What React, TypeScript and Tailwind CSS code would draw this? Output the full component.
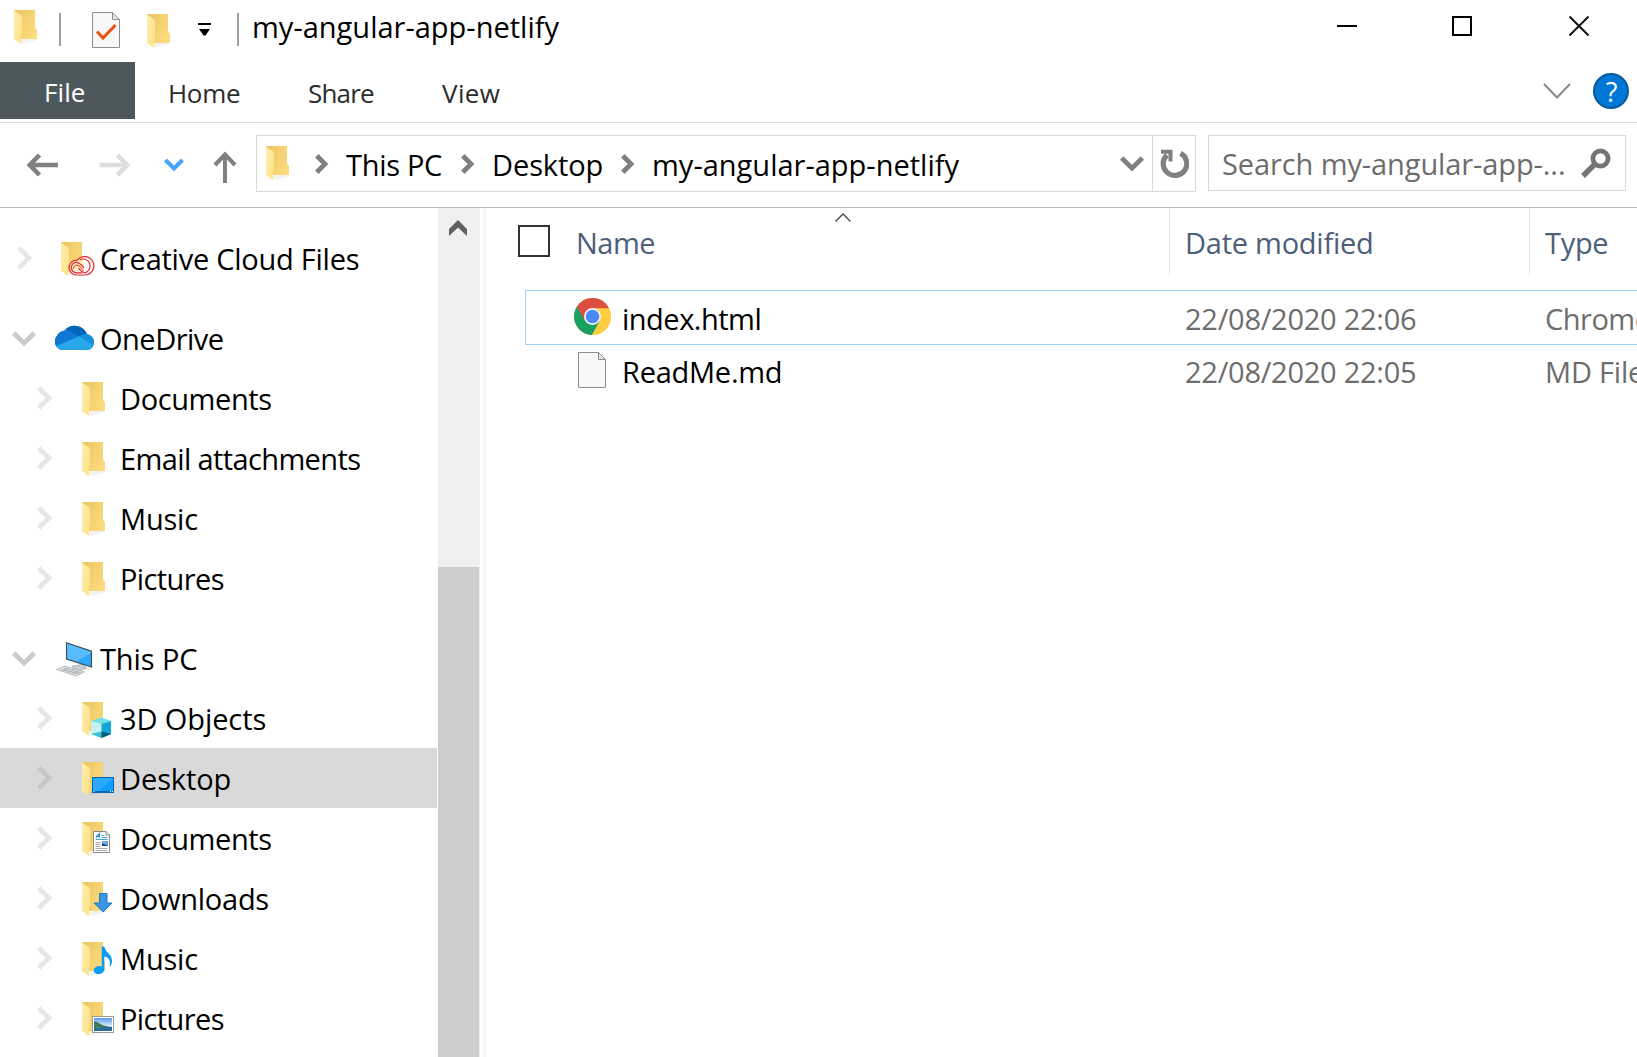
import type { ReactNode } from "react";

/* ---------- shared icons ---------- */

function FolderShape() {
  return (
    <>
      <defs>
        <linearGradient id="folderBack" x1="0" y1="0" x2="1" y2="0.6">
          <stop offset="0" stopColor="#ecc35f" />
          <stop offset="1" stopColor="#fbdb7d" />
        </linearGradient>
        <linearGradient id="folderFlap" x1="0" y1="0" x2="1" y2="1">
          <stop offset="0" stopColor="#ffeeb0" />
          <stop offset="1" stopColor="#ffe084" />
        </linearGradient>
      </defs>
      <path d="M6 29.5 L24 28.5 L20 31 L8 34 Z" fill="#000" opacity="0.05" />
      <path d="M0 0 H21 V17.5 L23 20 V29 H5 Z" fill="url(#folderBack)" />
      <path d="M0 0.5 L8 6 V24 L7 25.500 V34 L0 29 Z" fill="url(#folderFlap)" />
    </>
  );
}

function Folder({ children, className = "" }: { children?: ReactNode; className?: string }) {
  return (
    <svg className={`block h-9 w-[33px] shrink-0 overflow-visible ${className}`} viewBox="0 0 33 36">
      <FolderShape />
      {children}
    </svg>
  );
}

function CreativeCloudBadge() {
  const outline =
    "M16.500 18 A9.200 9.200 0 1 1 24 33 H15.500 A7.400 7.400 0 0 1 15.500 18.200 Z";
  return (
    <g fill="none" stroke="#e3262a">
      <path d={outline} fill="#fff" fillOpacity="0.5" strokeWidth="1.200" />
      <path d="M19 17.800 A7 7 0 1 1 24 30.800 C21 30.800 20 29 17.500 26.200" strokeWidth="1.200" />
      <path d="M21.500 30.800 H15.500 A5.200 5.200 0 1 1 15.500 20.400 C18.500 20.400 20 22.500 23 25.800" strokeWidth="1.200" />
      <path d="M12.500 26.500 A3.400 3.400 0 0 1 18 23.800 L22.500 28.200" strokeWidth="1" />
    </g>
  );
}

function CubeBadge() {
  return (
    <g>
      <path d="M9 19 L19.500 15.500 L29 19 L19.500 22 Z" fill="#6fdfe8" />
      <path d="M9 19 L19.500 22 V36 L9 32 Z" fill="#c4f2f2" />
      <path d="M19.500 22 L29 19 V32 L19.500 36 Z" fill="#12a5d6" />
      <path d="M9 32 L19.500 29.500 V36 Z" fill="#35c4d6" />
      <path d="M19.500 29.500 L29 32 L19.500 36 Z" fill="#075c70" />
    </g>
  );
}

function DesktopBadge() {
  return (
    <g>
      <rect x="10.500" y="15.500" width="21" height="15" fill="#0f9dff" stroke="#0067b0" />
      <path d="M11 16 H31 L17 29 H11 Z" fill="#2aa9ff" />
      <path d="M11 29.500 H31" stroke="#0067b0" />
      <path d="M11.500 29.500 h1 M28 29.500 h1 M30 29.500 h1" stroke="#fff" />
    </g>
  );
}

function DocumentBadge() {
  return (
    <g>
      <path d="M11.500 9.500 H24 L27.500 13 V30.500 H11.500 Z" fill="#fff" stroke="#8b8b8b" />
      <path d="M24 9.500 V13 H27.500" fill="#eee" stroke="#8b8b8b" />
      <path d="M14 15.500 L17.500 11.500 V15.500 M15 14.500 H18" stroke="#1c87c9" strokeWidth="1.200" fill="none" />
      <path d="M19.500 13.500 h3 M19.500 15.500 h6 M13.500 17.500 h12" stroke="#3fa3dc" />
      <path d="M13.500 20.500 h5 M13.500 22.500 h5 M13.500 24.500 h5 M13.500 26.500 h12 M13.500 28.500 h12" stroke="#a9a9a9" />
      <rect x="20" y="19" width="6" height="5" fill="#6ba9e6" />
      <path d="M20 24 V21.500 L26 23.500 V24 Z" fill="#22485e" />
    </g>
  );
}

function DownloadBadge() {
  return (
    <path
      d="M17.500 11.500 H25 V21 H30 L21.200 30 L12.200 21 H17.500 Z"
      fill="#3a96e4"
      stroke="#2377bd"
    />
  );
}

function MusicBadge() {
  return (
    <g fill="#0a9bf5">
      <ellipse cx="17" cy="28" rx="5.300" ry="4" transform="rotate(-12 17 28)" />
      <path d="M19.700 4.500 H22.300 C23 10 30 12 30 19 C30 22 28.800 24 27.500 25 C28.800 20 28 15.500 22.300 14.500 V28 H19.700 Z" />
    </g>
  );
}

function PictureBadge() {
  return (
    <g>
      <defs>
        <linearGradient id="sky" x1="0" y1="0" x2="0" y2="1">
          <stop offset="0" stopColor="#5b9bea" />
          <stop offset="0.6" stopColor="#d8ebfb" />
          <stop offset="1" stopColor="#7aa9c9" />
        </linearGradient>
      </defs>
      <rect x="10.500" y="14.500" width="21" height="16" fill="#fff" stroke="#9a9a9a" />
      <rect x="12" y="16" width="18" height="13" fill="url(#sky)" />
      <path d="M12 19.500 C15 19 18 22.500 22 23.500 L27 24.500 L12 26 Z" fill="#3f7a55" />
      <path d="M12 26 L24 24.500 L30 25 V29 H12 Z" fill="#2d6c94" />
    </g>
  );
}

function OneDrive() {
  return (
    <svg className="mb-px block h-[27px] w-10 shrink-0" viewBox="0 0 40 27">
      <defs>
        <clipPath id="cloud">
          <path d="M8.500 26 A8.500 8.500 0 0 1 1.500 12.500 A10 10 0 0 1 9.500 6.800 A13 13 0 0 1 32 10.300 A8 8 0 0 1 33 26 Z" />
        </clipPath>
      </defs>
      <g clipPath="url(#cloud)">
        <rect width="40" height="27" fill="#0f78d4" />
        <path d="M8 6 L12 -2 H34 V10 L24 12 Z" fill="#0364b8" />
        <path d="M8 6 Q12 5.500 15 7.500 L25 12.500 L0 23.500 V6 Z" fill="#0f78d4" />
        <path d="M24 12.500 Q28 9 40 9 V26 L22 13.500 Z" fill="#1490df" />
        <path d="M0 22.500 L24 12.300 L40 22 V27 H0 Z" fill="#28a8ea" />
      </g>
    </svg>
  );
}

function Computer() {
  return (
    <svg className="mt-0.5 block h-[35px] w-[37px] shrink-0" viewBox="0 0 37 35">
      <path d="M16 24 L26 22.500 L31 26 L24 28.500 L16.500 25.500 Z" fill="#c9ced1" stroke="#9aa1a5" strokeWidth="0.6" />
      <path d="M0.500 27.500 L9 24 L28.500 30 L20 34 Z" fill="#dfe3e6" stroke="#a4abb0" strokeWidth="0.7" />
      <path d="M5 27.500 L23 32 M8 26 L25 31 M7 29 L13 26 M12 30.500 L18 27.500 M17 32 L22.500 29" stroke="#9ba3a8" strokeWidth="0.7" />
      <path d="M10.500 0.800 L35.500 9.200 V25 L10.500 17 Z" fill="#2ea9fb" />
      <path d="M11 1.600 L35 9.600 V11 L20 20 L11 16.600 Z" fill="#58bcff" />
      <path d="M10.500 0.800 L35.500 9.200 V25 L10.500 17 Z" fill="none" stroke="#3d4a55" strokeWidth="1.100" />
    </svg>
  );
}

function Chrome() {
  return (
    <svg className="block size-[37px] shrink-0" viewBox="0 0 37 37">
      <circle cx="18.500" cy="18.500" r="18.500" fill="#ffcd40" />
      <path d="M2.800 8.800 A18.500 18.500 0 0 0 18 37 L26 23 L18.500 18.500 Z" fill="#18a160" />
      <path d="M2.800 8.800 L11 23 L18.500 10.500 H34.500 L35 10.200 A18.500 18.500 0 0 0 2.800 8.800 Z" fill="#dc4e41" />
      <path d="M18.500 10.500 H35.200 A18.500 18.500 0 0 1 18 37 L26 23 Z" fill="#ffcd40" />
      <circle cx="18.500" cy="18.500" r="8.500" fill="#f3f3f3" />
      <circle cx="18.500" cy="18.500" r="6.800" fill="#4a8af4" />
    </svg>
  );
}

function Page({ checked = false }: { checked?: boolean }) {
  return (
    <svg className="block h-9 w-7 shrink-0" viewBox="0 0 28 36">
      <path d="M0.500 0.500 H20.500 L27.500 7.500 V35.500 H0.500 Z" fill="#f7f8f9" stroke="#8e8e8e" />
      <path d="M20.500 0.500 V7.500 H27.500 Z" fill="#e4e5e6" stroke="#8e8e8e" />
      {checked && <path d="M5 19.500 L11 26 L23.500 13" fill="none" stroke="#f0500f" strokeWidth="3" />}
    </svg>
  );
}

function ChevronRight({ className }: { className: string }) {
  return (
    <svg className={`block h-6 w-4 shrink-0 ${className}`} viewBox="0 0 16 24" fill="none" stroke="currentColor" strokeWidth="4.600">
      <path d="M1.800 1.800 L12 12 L1.800 22.200" />
    </svg>
  );
}

function ChevronDown({ className }: { className: string }) {
  return (
    <svg className={`block h-4 w-6 shrink-0 ${className}`} viewBox="0 0 24 16" fill="none" stroke="currentColor" strokeWidth="4.800">
      <path d="M1.600 2 L12 12.200 L22.400 2" />
    </svg>
  );
}

function Crumb() {
  return (
    <svg className="block h-5 w-3.5 shrink-0 text-[#808080]" viewBox="0 0 14 20" fill="none" stroke="currentColor" strokeWidth="4.800">
      <path d="M1.800 1.800 L10 10 L1.800 18.200" />
    </svg>
  );
}

/* ---------- title bar, ribbon and address row ---------- */

function TitleBar() {
  return (
    <div className="flex h-[62px] shrink-0 items-start">
      <Folder className="mt-2.5 ml-3.5" />
      <div className="mt-[13px] ml-3 h-[33px] w-0.5 bg-[#a0a0a0]" />
      <div className="mt-3 ml-[31px]">
        <Page checked />
      </div>
      <Folder className="mt-3.5 ml-[27px]" />
      <svg className="mt-[23px] ml-[18px] h-[13px] w-[13px]" viewBox="0 0 13 13">
        <path d="M0 0 H13 V2 H0 Z M1 6 H12 L7.500 12.500 H5.500 Z" />
      </svg>
      <div className="mt-[13px] ml-[26px] h-[33px] w-0.5 bg-[#a0a0a0]" />
      <div className="mt-[7px] ml-[13px] leading-10">my-angular-app-netlify</div>
      <div className="mt-4 mr-12 ml-auto flex">
        <svg className="size-5" viewBox="0 0 20 20">
          <rect y="9" width="20" height="2" />
        </svg>
        <svg className="ml-[95px] size-5" viewBox="0 0 20 20">
          <rect x="1" y="1" width="18" height="18" fill="none" stroke="#000" strokeWidth="2" />
        </svg>
        <svg className="ml-[97px] size-5" viewBox="0 0 20 20">
          <path d="M0.500 0.500 L19.500 19.500 M19.500 0.500 L0.500 19.500" stroke="#111" strokeWidth="2" />
        </svg>
      </div>
    </div>
  );
}

function Ribbon() {
  return (
    <div className="flex h-[61px] shrink-0 items-start border-b border-[#d9dadb] text-[26px] leading-[57px] text-[#2b2b2b]">
      <div className="h-[57px] w-[135px] bg-[#4d585d] pl-11 leading-[61px] tracking-[0.1px] text-white">File</div>
      <div className="mt-[3px] ml-[33px] w-[140px] tracking-[-0.3px]">Home</div>
      <div className="mt-[3px] w-[134px] tracking-[-0.8px]">Share</div>
      <div className="mt-[3px] tracking-[0.4px]">View</div>
      <svg className="mt-[21px] ml-auto h-4 w-7" viewBox="0 0 28 16" fill="none" stroke="#8a8a8a" strokeWidth="2">
        <path d="M1 1 L14 14.500 L27 1" />
      </svg>
      <div className="mt-[11px] mr-2 ml-[22px] flex size-9 items-center justify-center rounded-full border-2 border-[#0a5a9f] bg-[#0078d7] pl-px text-[27px] leading-none text-white">
        ?
      </div>
    </div>
  );
}

function AddressRow() {
  return (
    <div className="flex h-[85px] shrink-0 items-start border-b border-[#bbb] pt-3">
      <div className="flex h-[59px] w-64 shrink-0 items-center">
        <svg className="ml-[27px] h-6 w-[31px]" viewBox="0 0 31 24" fill="none" stroke="#808080" strokeWidth="4.600">
          <path d="M12.500 2 L2.800 12 L12.500 22 M3 12 H31" />
        </svg>
        <svg className="ml-[41px] h-6 w-[32px]" viewBox="0 0 31 24" fill="none" stroke="#dedede" strokeWidth="4.600">
          <path d="M18 2 L27.700 12 L18 22 M0 12 H28" />
        </svg>
        <svg className="ml-[33px] h-3.5 w-5" viewBox="0 0 20 14" fill="none" stroke="#45a3fb" strokeWidth="4">
          <path d="M1.500 2 L10 10.500 L18.500 2" />
        </svg>
        <svg className="mt-1 ml-[29px] h-8 w-[24px]" viewBox="0 0 24 32" fill="none" stroke="#808080" strokeWidth="4">
          <path d="M2 14 L12 3.500 L22 14 M12 4 V32" />
        </svg>
      </div>
      <div className="flex h-[57px] w-[940px] shrink-0 items-center border border-[#d9d9d9]">
        <Folder className="ml-[9px]" />
        <div className="ml-4">
          <Crumb />
        </div>
        <div className="w-[132px] pt-0.5 pl-[17px] tracking-[-0.3px] whitespace-nowrap">This PC</div>
        <Crumb />
        <div className="w-[146px] pt-0.5 pl-[17px] tracking-[-0.1px] whitespace-nowrap">Desktop</div>
        <Crumb />
        <div className="ml-[17px] pt-0.5">my-angular-app-netlify</div>
        <ChevronDown className="ml-auto text-[#808080]" />
        <div className="ml-2 flex h-full w-[43px] items-center justify-center border-l border-[#d9d9d9]">
          <svg className="h-[30px] w-[29px]" viewBox="0 0 29 30" fill="none" stroke="#808080">
            <path d="M20.500 4.200 A11.800 11.800 0 1 1 7 6" strokeWidth="5.200" />
            <path d="M1 2.800 H10.500 V12.500" strokeWidth="4" />
          </svg>
        </div>
      </div>
      <div className="ml-3 flex h-14 w-[418px] shrink-0 items-center border border-[#d9d9d9] text-[#6d6d6d]">
        <div className="ml-[13px] pt-0.5 tracking-[-0.1px] whitespace-nowrap">Search my-angular-app-...</div>
        <svg className="mr-3.5 ml-auto h-[30px] w-[30px]" viewBox="0 0 30 30" fill="none" stroke="#757575">
          <circle cx="19.500" cy="10.500" r="7.600" strokeWidth="4.800" />
          <path d="M13.500 16.500 L2 28" strokeWidth="5.400" />
        </svg>
      </div>
    </div>
  );
}

/* ---------- navigation pane ---------- */

function RootRow({ open, icon, children }: { open?: boolean; icon: ReactNode; children: ReactNode }) {
  return (
    <div className="flex h-[60px] items-center">
      <div className="flex w-[55px] shrink-0">
        {open ? <ChevronDown className="mt-0.5 ml-3 text-[#cbcbcb]" /> : <ChevronRight className="ml-[17px] text-[#e6e6e6]" />}
      </div>
      <div className="flex w-[45px] shrink-0">{icon}</div>
      {children}
    </div>
  );
}

function ChildRow({ badge, selected, children }: { badge?: ReactNode; selected?: boolean; children: ReactNode }) {
  return (
    <div className={selected ? "flex h-[60px] items-center bg-[#d9d9d9]" : "flex h-[60px] items-center"}>
      <ChevronRight className={selected ? "ml-[37px] text-[#c6c6c6]" : "ml-[37px] text-[#e6e6e6]"} />
      <Folder className="mt-1 ml-[29px]">{badge}</Folder>
      {children}
    </div>
  );
}

function NavPane() {
  const label = "pt-0.5 whitespace-nowrap";
  return (
    <nav className="w-[437px] shrink-0 pt-5">
      <RootRow icon={<Folder className="mt-1 ml-1.5"><CreativeCloudBadge /></Folder>}>
        <span className={`${label} tracking-[-0.25px]`}>Creative Cloud Files</span>
      </RootRow>
      <div className="h-5" />
      <RootRow open icon={<OneDrive />}>
        <span className={`${label} tracking-[-0.5px]`}>OneDrive</span>
      </RootRow>
      <ChildRow><span className={`${label} ml-[5px] tracking-[-0.4px]`}>Documents</span></ChildRow>
      <ChildRow><span className={`${label} ml-[5px] tracking-[-0.62px]`}>Email attachments</span></ChildRow>
      <ChildRow><span className={`${label} ml-[5px] tracking-[-0.2px]`}>Music</span></ChildRow>
      <ChildRow><span className={`${label} ml-[5px] tracking-[-0.6px]`}>Pictures</span></ChildRow>
      <div className="h-5" />
      <RootRow open icon={<div className="ml-px"><Computer /></div>}>
        <span className={`${label} tracking-[-0.1px]`}>This PC</span>
      </RootRow>
      <ChildRow badge={<CubeBadge />}><span className={`${label} ml-[5px] tracking-[-0.1px]`}>3D Objects</span></ChildRow>
      <ChildRow selected badge={<DesktopBadge />}><span className={`${label} ml-[5px] tracking-[-0.1px]`}>Desktop</span></ChildRow>
      <ChildRow badge={<DocumentBadge />}><span className={`${label} ml-[5px] tracking-[-0.4px]`}>Documents</span></ChildRow>
      <ChildRow badge={<DownloadBadge />}><span className={`${label} ml-[5px] tracking-[-0.25px]`}>Downloads</span></ChildRow>
      <ChildRow badge={<MusicBadge />}><span className={`${label} ml-[5px] tracking-[-0.2px]`}>Music</span></ChildRow>
      <ChildRow badge={<PictureBadge />}><span className={`${label} ml-[5px] tracking-[-0.6px]`}>Pictures</span></ChildRow>
    </nav>
  );
}

function Scrollbar() {
  return (
    <div className="ml-px flex w-[42px] shrink-0 flex-col bg-[#efefef]">
      <svg className="mt-3 ml-[11px] h-4 w-[18px] shrink-0" viewBox="0 0 18 16">
        <path d="M9 0 L18 9 V16 L9 7.500 L0 16 V9 Z" fill="#606060" />
      </svg>
      <div className="mt-[331px] w-[41px] flex-1 bg-[#cdcdcd]" />
    </div>
  );
}

/* ---------- file list ---------- */

function FileList() {
  return (
    <main className="flex min-w-0 flex-1 flex-col">
      <div className="flex h-[67px] shrink-0 items-start text-[#4c607a]">
        <div className="mt-[17px] ml-8 size-8 shrink-0 border-2 border-[#333]" />
        <div className="flex w-[619px] shrink-0">
          <div className="mt-[15px] ml-[26px] w-[259px] leading-10 tracking-[-0.5px]">Name</div>
          <svg className="mt-[5px] h-[9px] w-4" viewBox="0 0 16 9" fill="none" stroke="#444" strokeWidth="1.300">
            <path d="M0.500 8.500 L8 1 L15.500 8.500" />
          </svg>
        </div>
        <div className="h-full w-[360px] shrink-0 border-l border-[#e2e2e2] pt-[15px] pl-[15px] leading-10 tracking-[-0.25px]">Date modified</div>
        <div className="h-full flex-1 border-l border-[#e2e2e2] pt-[15px] pl-[15px] leading-10 tracking-[-0.3px]">Type</div>
      </div>
      <div className="mt-[15px] ml-[39px] flex h-[55px] shrink-0 items-center border-y border-l border-[#99d1ff] text-[#6d6d6d]">
        <div className="-mt-0.5 ml-12 w-12">
          <Chrome />
        </div>
        <div className="w-[563px] shrink-0 pt-0.5 tracking-[-0.5px] text-black">index.html</div>
        <div className="w-[360px] shrink-0 pt-0.5 tracking-[-0.25px]">22/08/2020 22:06</div>
        <div className="min-w-0 flex-1 overflow-hidden pt-0.5 tracking-[-0.5px] whitespace-nowrap">Chrome HTML Document</div>
      </div>
      <div className="ml-[39px] flex h-[53px] shrink-0 items-center text-[#6d6d6d]">
        <div className="mb-1 ml-[53px] w-11">
          <Page />
        </div>
        <div className="w-[563px] shrink-0 pt-px tracking-[-0.25px] text-black">ReadMe.md</div>
        <div className="w-[360px] shrink-0 pt-px tracking-[-0.25px]">22/08/2020 22:05</div>
        <div className="min-w-0 flex-1 overflow-hidden pt-px tracking-[-0.2px] whitespace-nowrap">MD File</div>
      </div>
    </main>
  );
}

export default function App() {
  return (
    <div className="flex h-screen w-screen flex-col overflow-hidden bg-white font-['Open_Sans',sans-serif] text-[29px] leading-10 text-black">
      <TitleBar />
      <Ribbon />
      <AddressRow />
      <div className="flex min-h-0 flex-1 overflow-hidden">
        <NavPane />
        <Scrollbar />
        <div className="ml-[3px] w-[3px] shrink-0 bg-[#f5f5f5]" />
        <FileList />
      </div>
    </div>
  );
}
